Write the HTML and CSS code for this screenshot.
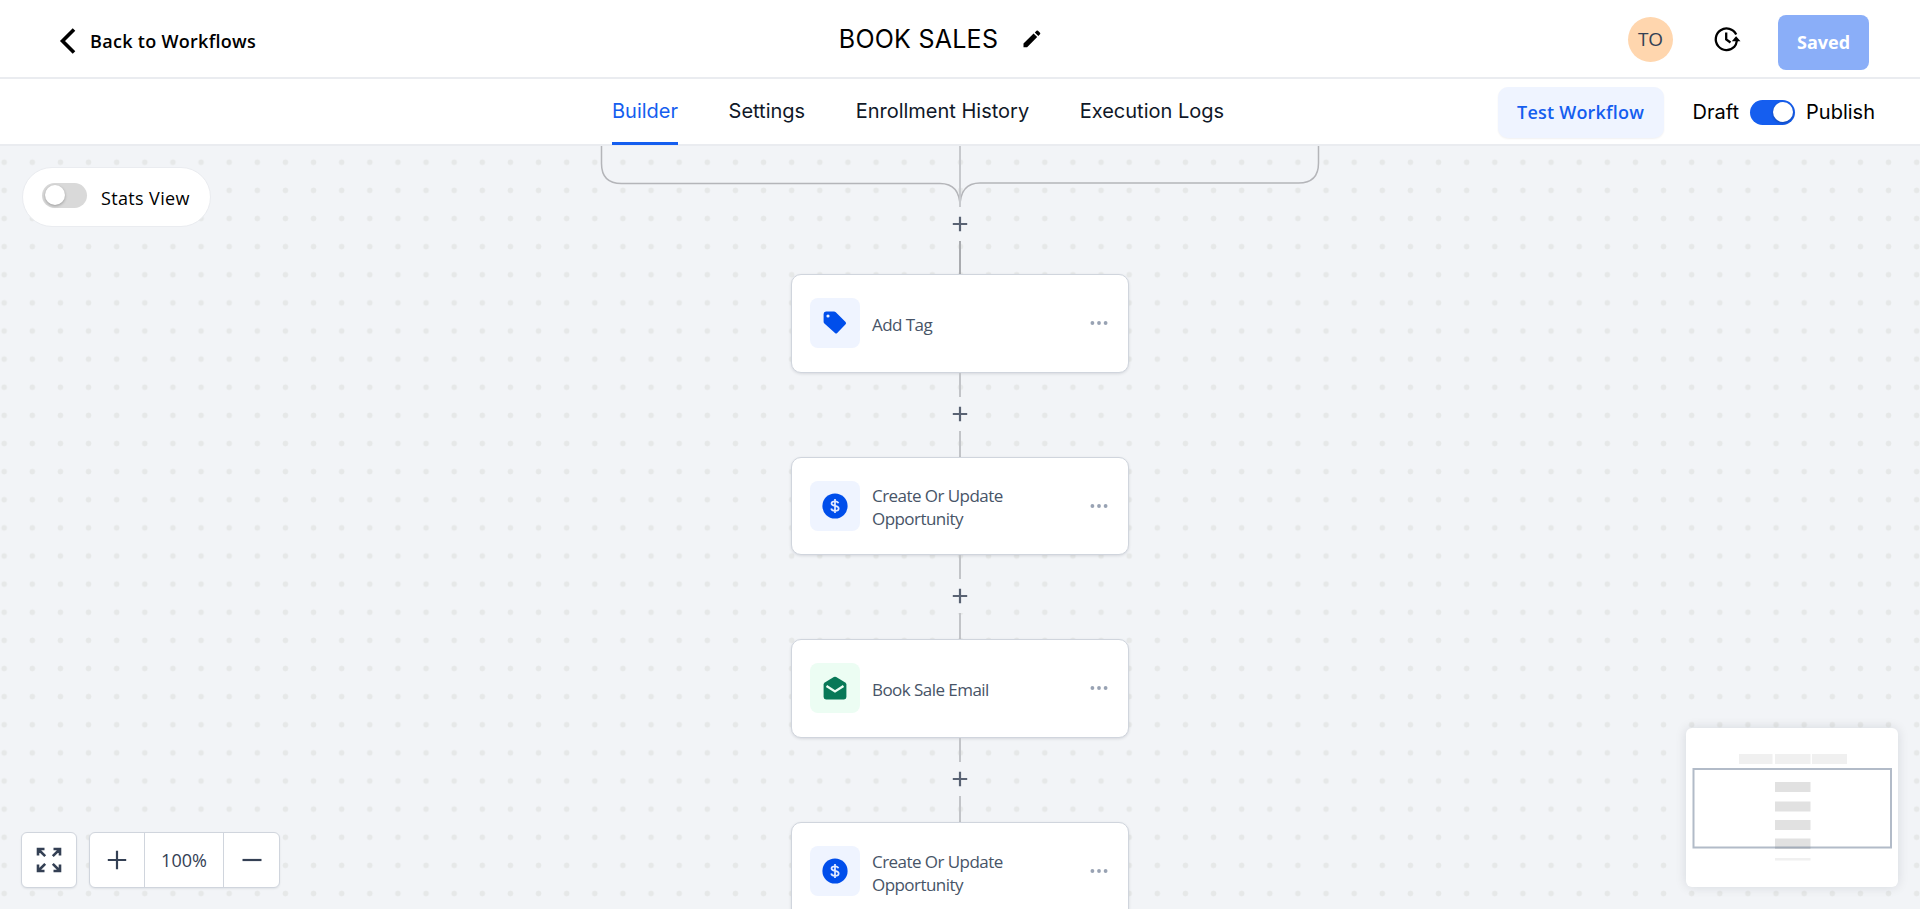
FILE: index.html
```html
<!DOCTYPE html>
<html lang="en">

<head>
    <meta charset="UTF-8">
    <meta name="viewport" content="width=device-width, initial-scale=1.0">
    <title>Workflow Builder</title>
    <link rel="stylesheet" href="styles.css">
</head>

<body>
    <!-- shared icons -->
    <svg class="sprite" width="0" height="0">
        <symbol id="plus" viewBox="0 0 16 16">
            <path d="M8 .8v14.400M.8 8h14.400" fill="none" stroke="#596273" stroke-width="2.200" />
        </symbol>
        <symbol id="dots" viewBox="0 0 18 6">
            <g fill="#98a2b3">
                <circle cx="2.4" cy="3" r="1.9" />
                <circle cx="9" cy="3" r="1.9" />
                <circle cx="15.6" cy="3" r="1.9" />
            </g>
        </symbol>
        <symbol id="dollar" viewBox="0 0 26 26">
            <circle cx="13" cy="13" r="12.6" fill="#004eeb" />
            <path d="M13 6v14M16.4 10.2C16 8.9 14.800 8.300 13 8.300c-2 0-3.500.8-3.500 2.300 0 3.300 7.200 1.400 7.200 4.800 0 1.600-1.500 2.400-3.700 2.400-2.100 0-3.500-.8-3.800-2.300" fill="none" stroke="#e3ebff" stroke-width="1.700" />
        </symbol>
    </svg>

    <div class="page">
        <header class="header">
            <div class="back">
                <svg width="18" height="28" viewBox="0 0 18 28">
                    <path d="M15 2.500 3.500 14 15 25.500" fill="none" stroke="#000" stroke-width="3.600" />
                </svg>
                <span>Back to Workflows</span>
            </div>
            <div class="title">
                <h1>BOOK SALES</h1>
                <svg width="18" height="18" viewBox="0 0 18 18">
                    <path d="M.5 17.200v-3.600L10.600 3.500l3.600 3.600L4.100 17.200zM11.800 2.400 13.500.7q.8-.6 1.500 0l2 2q.7.800 0 1.600l-1.700 1.700z" />
                </svg>
            </div>
            <div class="header-right">
                <div class="avatar">TO</div>
                <svg class="clock" width="28" height="26" viewBox="0 0 28 26">
                    <g fill="none" stroke="#000" stroke-width="2.300">
                        <path d="M23.200 8.400A10.800 10.800 0 1 0 21.300 20.800" />
                        <path d="M21 21.200A10.800 10.800 0 0 0 23.800 15" />
                        <path d="M13.200 6.500v7l4.300 3" />
                    </g>
                    <path d="m18.800 15.300 4.300-5.100 4.400 5.100z" />
                </svg>
                <button class="saved">Saved</button>
            </div>
        </header>

        <nav class="nav">
            <ul class="tabs">
                <li class="active">Builder</li>
                <li>Settings</li>
                <li>Enrollment History</li>
                <li>Execution Logs</li>
            </ul>
            <div class="nav-right">
                <button class="test">Test Workflow</button>
                <span>Draft</span>
                <div class="toggle on"></div>
                <span>Publish</span>
            </div>
        </nav>

        <main class="canvas">
            <div class="flow">
                <svg class="branch" width="722" height="61" viewBox="0 0 722 61">
                    <g fill="none" stroke="#b4b5b9" stroke-width="1.500">
                        <path d="M2.500 0v17.500q0 20 20 20H341q20 0 20 23.500" />
                        <path d="M719.500 0v17q0 20-20 20H381q-20 0-20 24" />
                        <path d="M361 0v61" stroke="#c7c9cd" stroke-width="2" />
                    </g>
                </svg>
                <div class="add"><svg width="16" height="16"><use href="#plus" /></svg></div>

                <div class="line dark"></div>
                <div class="card">
                    <div class="icon blue">
                        <svg width="26" height="26" viewBox="0 0 26 26">
                            <path fill="#004eeb" fill-rule="evenodd" d="M4 1.500h8q1 0 1.800.7l9.800 9.700q1 1.200 0 2.300l-8.400 8.900q-1.100 1-2.200 0L2.400 13.500q-.8-.8-.8-1.800V4q0-2.500 2.400-2.500zM6 4.400a1.600 1.600 0 1 0 0 3.200 1.600 1.600 0 0 0 0-3.200z" />
                        </svg>
                    </div>
                    <p>Add Tag</p>
                    <svg width="18" height="6"><use href="#dots" /></svg>
                </div>
                <div class="line short"></div>
                <div class="add"><svg width="16" height="16"><use href="#plus" /></svg></div>

                <div class="line"></div>
                <div class="card">
                    <div class="icon blue"><svg width="26" height="26"><use href="#dollar" /></svg></div>
                    <p>Create Or Update Opportunity</p>
                    <svg width="18" height="6"><use href="#dots" /></svg>
                </div>
                <div class="line short"></div>
                <div class="add"><svg width="16" height="16"><use href="#plus" /></svg></div>

                <div class="line"></div>
                <div class="card">
                    <div class="icon green">
                        <svg width="26" height="26" viewBox="0 0 26 26">
                            <path fill="#087857" d="M11.800 2.100q1.200-.7 2.400 0l9 5.300q1.200.8 1.200 2.100v12.500q0 2.400-2.400 2.400H4q-2.400 0-2.400-2.400V9.500q0-1.300 1.200-2.100z" />
                            <path fill="none" stroke="#ecfdf3" stroke-width="2.400" d="m4.500 11 8.500 5.400 8.500-5.400" />
                        </svg>
                    </div>
                    <p>Book Sale Email</p>
                    <svg width="18" height="6"><use href="#dots" /></svg>
                </div>
                <div class="line short"></div>
                <div class="add"><svg width="16" height="16"><use href="#plus" /></svg></div>

                <div class="line"></div>
                <div class="card">
                    <div class="icon blue"><svg width="26" height="26"><use href="#dollar" /></svg></div>
                    <p>Create Or Update Opportunity</p>
                    <svg width="18" height="6"><use href="#dots" /></svg>
                </div>
            </div>

            <div class="stats">
                <div class="toggle"></div>
                <span>Stats View</span>
            </div>

            <div class="controls">
                <div class="box fit">
                    <svg width="26" height="26" viewBox="0 0 26 26">
                        <path d="M2 8.500V2h6.500M2 2l7.200 7.200M17.500 2H24v6.500M24 2l-7.200 7.200M2 17.500V24h6.500M2 24l7.200-7.200M17.500 24H24v-6.500M24 24l-7.200-7.200" fill="none" stroke="#344054" stroke-width="2.600" />
                    </svg>
                </div>
                <div class="box zoom">
                    <div class="zoom-btn">
                        <svg width="20" height="20" viewBox="0 0 20 20"><path d="M10 .8v18.400M.8 10h18.400" stroke="#344054" stroke-width="2.200" /></svg>
                    </div>
                    <div class="zoom-value">100%</div>
                    <div class="zoom-btn">
                        <svg width="20" height="20" viewBox="0 0 20 20"><path d="M.5 10h19" stroke="#344054" stroke-width="2.200" /></svg>
                    </div>
                </div>
            </div>

            <div class="minimap">
                <svg width="212" height="159" viewBox="0 0 212 159">
                    <g fill="#f0f0f0">
                        <path d="M53 26h33.500v10H53zM89 26h35.500v10H89zM126 26h35v10h-35zM89 130h35.500v2.500H89z" />
                    </g>
                    <g fill="#e1e1e1">
                        <path d="M89 54h35.500v10H89zM89 73.500h35.500v10H89zM89 92h35.500v10H89zM89 110.500h35.500v10.500H89z" />
                    </g>
                    <path d="M7.500 41h197.500v78.500H7.500z" fill="none" stroke="#667892" stroke-opacity=".5" stroke-width="2" />
                </svg>
            </div>
        </main>
    </div>
</body>

</html>
```
FILE: styles.css
```css
* {
    margin: 0;
    padding: 0;
    box-sizing: border-box;
}

body {
    font-family: "Inter", sans-serif;
    color: #000;
    background-color: #fff;
}

.sprite {
    display: block;
}

.page {
    display: flex;
    flex-direction: column;
    height: 909px;
    overflow: hidden;
}

button {
    border: 0;
    font-family: "Open Sans", sans-serif;
}

/* header */

.header {
    display: grid;
    grid-template-columns: 1fr auto 1fr;
    height: 79px;
    flex: none;
    border-bottom: 2px solid #eaecf0;
}

.back {
    display: flex;
    align-items: center;
    gap: 13px;
    padding: 4px 0 0 59px;
    font: 600 18px "Open Sans", sans-serif;
    letter-spacing: .3px;
}

.title {
    display: flex;
    align-items: center;
    gap: 25px;
    margin-right: 40px;
}

.title h1 {
    font-size: 25px;
    font-weight: 400;
    letter-spacing: .25px;
}

.header-right {
    display: flex;
    justify-content: flex-end;
    align-items: center;
    padding-right: 51px;
}

.avatar {
    width: 45px;
    height: 45px;
    margin-top: 1px;
    border-radius: 50%;
    background-color: #ffd6ae;
    color: #344054;
    font: 400 19px/45px "Open Sans", sans-serif;
    text-align: center;
}

.clock {
    margin: 0 37px 0 40px;
}

.saved {
    width: 91px;
    height: 55px;
    margin-top: 7px;
    border-radius: 8px;
    background-color: #8aaef8;
    color: #fff;
    font-size: 18px;
    font-weight: 700;
}

/* tabs */

.nav {
    display: flex;
    justify-content: space-between;
    height: 67px;
    flex: none;
    border-bottom: 2px solid #eaecf0;
    padding: 0 45px 0 612px;
}

.tabs {
    display: flex;
    gap: 50.5px;
    list-style: none;
    font-size: 20px;
    color: #101828;
}

.tabs li {
    height: 66px;
    line-height: 65px;
    white-space: nowrap;
}

.tabs .active {
    color: #155eef;
    border-bottom: 3px solid #155eef;
}

.nav-right {
    display: flex;
    align-items: center;
    font-size: 20px;
    padding-top: 1px;
}

.test {
    width: 166px;
    height: 51px;
    margin-right: 29px;
    border-radius: 10px;
    background-color: #eff4ff;
    color: #155eef;
    font-size: 18px;
    font-weight: 600;
    letter-spacing: .2px;
    box-shadow: 0 1px 2px rgba(16, 24, 40, .06);
}

.toggle {
    width: 45px;
    height: 25px;
    border-radius: 13px;
    background-color: #d9d9d9;
    padding: 2.5px;
}

.toggle::before {
    content: "";
    display: block;
    width: 20px;
    height: 20px;
    border-radius: 50%;
    background-color: #fff;
    box-shadow: 0 1px 3px rgba(0, 0, 0, .3);
}

.toggle.on {
    background-color: #155eef;
    margin: 0 11px;
}

.toggle.on::before {
    margin-left: auto;
}

/* canvas */

.canvas {
    position: relative;
    flex: 1;
    overflow: hidden;
    background-color: #f2f4f7;
    background-image: radial-gradient(circle, #e6e8e8 2.4px, transparent 3.2px);
    background-size: 28.125px 28.125px;
    background-position: -9.9px 2.2px;
}

.flow {
    display: flex;
    flex-direction: column;
    align-items: center;
}

.branch {
    display: block;
    flex: none;
}

.add {
    display: flex;
    justify-content: center;
    align-items: center;
    width: 34px;
    height: 34px;
    flex: none;
    background-color: #f2f4f7;
}

.line {
    width: 2px;
    height: 26.1px;
    flex: none;
    background-color: #c2c4c8;
}

.line.short {
    height: 24px;
}

.line.dark {
    height: 33px;
    background-color: #a9abaf;
}

.card {
    display: flex;
    align-items: center;
    width: 338px;
    height: 98.5px;
    flex: none;
    padding: 0 20px 0 18px;
    border: 1.5px solid #d0d5dd;
    border-radius: 10px;
    background-color: #fff;
    box-shadow: 0 1px 3px rgba(16, 24, 40, .12);
}

.icon {
    display: flex;
    justify-content: center;
    align-items: center;
    width: 50px;
    height: 50px;
    flex: none;
    border-radius: 8px;
}

.icon.blue {
    background-color: #eff4ff;
}

.icon.green {
    background-color: #ecfdf3;
}

.card p {
    flex: 1;
    margin-left: 12px;
    padding: 3px 60px 0 0;
    font: 400 17px/23px "Open Sans", sans-serif;
    letter-spacing: -.55px;
    color: #475467;
}

.stats {
    position: absolute;
    left: 22px;
    top: 21px;
    display: flex;
    align-items: center;
    gap: 14px;
    width: 189px;
    height: 60px;
    padding-left: 19px;
    border: 1px solid #eaecf0;
    border-radius: 30px;
    background-color: #fff;
    font: 400 18px "Open Sans", sans-serif;
    letter-spacing: .35px;
}

.stats .toggle {
    margin-top: -4px;
}

.stats span {
    padding-top: 2px;
}

.controls {
    position: absolute;
    left: 21px;
    bottom: 21px;
    display: flex;
    gap: 12px;
}

.box {
    display: flex;
    justify-content: center;
    align-items: center;
    height: 56px;
    border: 1px solid #d0d5dd;
    border-radius: 6px;
    background-color: #fff;
    box-shadow: 0 1px 2px rgba(16, 24, 40, .08);
}

.fit {
    width: 56px;
}

.zoom {
    width: 191px;
}

.zoom-btn {
    display: flex;
    justify-content: center;
    flex: 1;
}

.zoom-btn:first-child {
    flex: none;
    width: 54px;
}

.zoom-value {
    width: 80px;
    height: 54px;
    border: 1px solid #d0d5dd;
    border-width: 0 1px;
    color: #344054;
    font: 400 18px/54px "Open Sans", sans-serif;
    text-align: center;
}

.minimap {
    position: absolute;
    right: 22px;
    bottom: 22px;
    width: 212px;
    height: 159px;
    border-radius: 6px;
    background-color: #fff;
    box-shadow: 0 0 12px rgba(16, 24, 40, .12);
}
```
